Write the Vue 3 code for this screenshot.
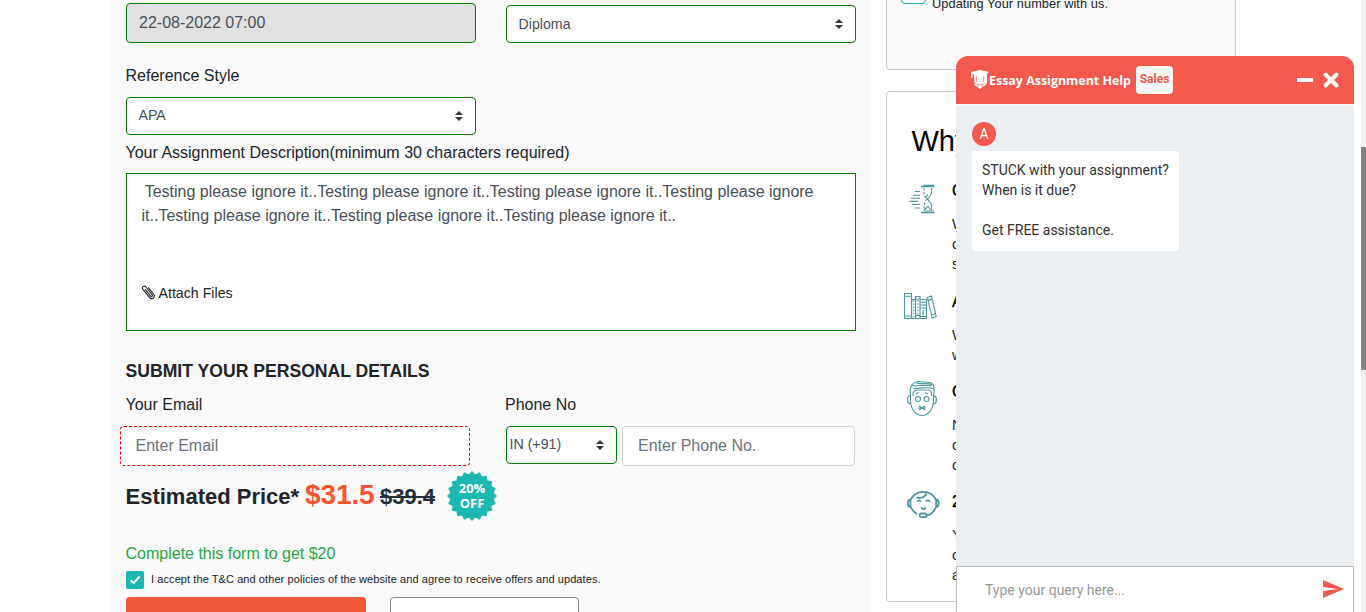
<script setup>
const features = [
  { icon: 'hourglass', title: 'C', lines: ['W', 'o', 's'] },
  { icon: 'books', title: 'A', lines: ['W', 'w'] },
  { icon: 'face', title: 'C', lines: ['N', 'o', 'o'] },
  { icon: 'support', title: '2', lines: ['Y', 'o', 'a'] }
]
const starPoints = Array.from({ length: 40 }, (_, i) => {
  const r = i % 2 ? 21.8 : 25
  const a = (i * Math.PI) / 20 - Math.PI / 2
  return `${(25 + r * Math.cos(a)).toFixed(2)},${(25 + r * Math.sin(a)).toFixed(2)}`
}).join(' ')
const testing = 'Testing please ignore it..'
</script>

<template>
  <div class="page">
    <main class="form">
      <div class="row top-row">
        <div class="field date">22-08-2022 07:00</div>
        <div class="field select">
          <span>Diploma</span>
          <svg class="caret" viewBox="0 0 8 10"><path d="M4 0L8 4H0zM0 6H8L4 10z" /></svg>
        </div>
      </div>
      <label class="label ref">Reference Style</label>
      <div class="field select apa">
        <span>APA</span>
        <svg class="caret" viewBox="0 0 8 10"><path d="M4 0L8 4H0zM0 6H8L4 10z" /></svg>
      </div>
      <label class="label desc">Your Assignment Description(minimum 30 characters required)</label>
      <div class="textarea">
        <p class="typed">&nbsp;{{ testing.repeat(7) }}</p>
        <div class="attach">
          <svg class="clip" viewBox="0 0 14 16">
            <path d="M4 5.2L9.6 12.2C10.5 13.3 12 12 11.2 10.9L4.9 3C3.2.9.2 3.2 1.9 5.4L8.4 13.4C10.9 16.4 15 13.1 12.5 10L7.2 3.4" />
          </svg>
          <span>Attach Files</span>
        </div>
      </div>
      <h2 class="heading">SUBMIT YOUR PERSONAL DETAILS</h2>
      <div class="row labels">
        <label class="label">Your Email</label>
        <label class="label">Phone No</label>
      </div>
      <div class="row inputs">
        <div class="field email">Enter Email</div>
        <div class="phone">
          <div class="field select code">
            <span>IN (+91)</span>
            <svg class="caret" viewBox="0 0 8 10"><path d="M4 0L8 4H0zM0 6H8L4 10z" /></svg>
          </div>
          <div class="field number">Enter Phone No.</div>
        </div>
      </div>
      <div class="price">
        <span class="est">Estimated Price*</span>
        <span class="now">$31.5</span>
        <s class="was">$39.4</s>
        <div class="badge">
          <svg viewBox="0 0 50 50"><polygon :points="starPoints" /></svg>
          <span>20%<br />OFF</span>
        </div>
      </div>
      <p class="bonus">Complete this form to get $20</p>
      <div class="terms">
        <span class="check"><svg viewBox="0 0 18 18"><path d="M4.6 9.2L7.6 12L13.6 5.6" /></svg></span>
        <span>I accept the T&amp;C and other policies of the website and agree to receive offers and updates.</span>
      </div>
      <div class="buttons">
        <div class="btn primary"></div>
        <div class="btn outline"></div>
      </div>
    </main>

    <aside class="side">
      <section class="card offer">
        <span class="box"></span>
        <span class="offer-text">Updating Your number with us.</span>
      </section>
      <section class="card why">
        <h3>Why</h3>
        <div v-for="f in features" :key="f.icon" class="feature" :class="f.icon">
          <svg v-if="f.icon === 'hourglass'" class="ico" width="34" height="34" viewBox="0 0 34 34">
            <path stroke-width="1.6" d="M15 4.5H28.5M15 30.5H28.5" />
            <path d="M17.5 3.4H28M17.5 29H28" />
            <path d="M25.5 6C26.5 12 24.5 14 21 17C24.5 20 26.5 22 25.5 28" />
            <path stroke-dasharray="2.5 1.5" d="M18 6V12C18 14 20.5 15 21 17C19.5 19 18 20 18 28" />
            <path d="M18 28L22 24.5L25 28M19 16L22 12.5" />
            <path d="M9 9.5H14M7 13.2H14M5 16.2H14M3.5 19.4H12M6 22.5H14M9 26H14" />
          </svg>
          <svg v-else-if="f.icon === 'books'" class="ico" width="34" height="34" viewBox="0 0 34 34">
            <path d="M1.5 3.5H8.5V28.5H1.5zM1.5 6.3H8.5M1.5 26H8.5M8.5 9.5H12.5V28.5H8.5zM12.5 6.5H17V28.5H12.5zM12.5 9H17M12.5 25.5H17M17 9.5H23.5V28.5H17zM17 12.2H23.5M17 15H23.5M17 18H23.5M17 26.5H23.5M24.5 7.5L28.5 6L33.2 26.3L29.2 28zM25.2 10.5L29 9M28.5 25.3L32.5 23.6" />
            <path stroke-width="2" stroke-dasharray="2 1.2" opacity=".55" d="M10.5 10V28M14.8 10V25" />
            <path d="M20 20V25" />
          </svg>
          <svg v-else-if="f.icon === 'face'" class="ico" width="34" height="40" viewBox="0 0 34 40">
            <path d="M5.5 18V23C6 32 11 37.5 17 37.5S28 32 28.5 23V18M5.5 18C4.5 12 5 4 14 3.5L25 4.5C29 5 30 11 28.5 18M8 18C7.5 13 10 12 13 12H22C26 12 27 14 26.5 18M7 7.5C12 9 20 5.5 27 8M8 10.5C14 11 21 8.5 28 10.5M11 5C16 6.5 22 4.5 27 6.5" />
            <path d="M5.5 18C1.5 17 1.5 26 6 26M28.5 18C32.5 17 32.5 26 28 26M11 16L14 14.5M20 14.5L23 16M14 28L20 32M20 28L14 32M13 30H21" />
            <circle cx="13" cy="21" r="2.5" /><circle cx="21.5" cy="21" r="2.5" />
          </svg>
          <svg v-else class="ico bold" width="36" height="34" viewBox="0 0 36 34">
            <path d="M5.5 17.5V11C8 5.5 12.5 2.8 18.5 2.8S28.5 5.5 31.2 11V17.5C29.5 22 26 25.5 21.5 27M5.5 10.5C2 10.5 2.2 18 5.5 18M31.2 10.5C34.5 10.5 34.5 18 31.2 18M5.5 17.5C7 21 9 23.2 12 25M11.5 8.5C17 9.5 20.5 7.5 21.5 4M12.2 12.6C13 11 15.2 11 16 12.6M21 12.6C21.8 11 24 11 24.8 12.6M16.3 18.4C17 20.5 20 20.5 20.8 18.4" />
            <rect x="14.7" y="24.5" width="7" height="3.6" rx="1.8" />
          </svg>
          <div class="copy">
            <strong>{{ f.title }}</strong>
            <p><span v-for="(l, i) in f.lines" :key="i">{{ l }}</span></p>
          </div>
        </div>
      </section>
    </aside>

    <div class="chat">
      <header>
        <svg class="logo" width="162" height="26" viewBox="0 0 162 26">
          <path class="cap" d="M0 4L9 2L18 4L16 6V15L14.5 17L9 21L3.5 17L3 6.5L1.5 6V10H.3z" />
          <path class="cap-lines" d="M5.5 8V14M12.6 8V14M4 15.5L9 17L14 15.5M7 16V19M11 16V19" />
          <text x="18" y="16.5" textLength="142" lengthAdjust="spacingAndGlyphs">Essay Assignment Help</text>
        </svg>
        <span class="sales">Sales</span>
        <svg class="controls" width="44" height="20" viewBox="0 0 44 20">
          <path class="min" d="M0 10H16" /><path class="close" d="M28.5 4.5L39.5 15.5M39.5 4.5L28.5 15.5" />
        </svg>
      </header>
      <div class="messages">
        <div class="avatar">A</div>
        <div class="bubble">STUCK with your assignment?<br />When is it due?<br /><br />Get FREE assistance.</div>
      </div>
      <div class="query">
        <span>Type your query here...</span>
        <svg width="21" height="18" viewBox="0 0 21 18"><path d="M0 0L21 9L0 18V11L15 9L0 7z" /></svg>
      </div>
    </div>
    <div class="scroll"><div class="thumb"></div></div>
  </div>
</template>

<style>
body { margin: 0; overflow: hidden; }
</style>

<style scoped>
* { box-sizing: border-box; }
.page { position: relative; width: 1366px; height: 612px; overflow: hidden; display: flex; background: #fff; padding-left: 111px; font-family: "Liberation Sans", Arial, sans-serif; font-size: 16px; line-height: 24px; color: #212529; }
h2, h3, p { margin: 0; }
.form { width: 760px; height: 612px; padding: 3px 15px 0; background: #f9f9f9; overflow: hidden; flex: none; }
.row { display: flex; gap: 30px; }
.row > * { width: 350px; }
.field { display: flex; align-items: center; height: 40px; border: 1px solid #ced4da; border-radius: 4px; background: #fff; color: #6c757d; }
.top-row { align-items: flex-end; }
.date { background: #e1e1e1; border-color: green; padding: 0 12px 1px; color: #495057; }
.select { height: 38px; border-color: green; color: #495057; font-size: 14.2px; padding: 0 12px 0 11.5px; justify-content: space-between; }
.apa span, .code span { margin-top: -2px; }
.caret { width: 8px; height: 10px; fill: #343a40; }
.label { display: block; margin-left: -0.5px; }
.ref { margin-top: 21px; }
.apa { margin-top: 9px; width: 350px; }
.desc { margin-top: 6px; }
.textarea { height: 158px; width: 730px; margin-top: 8px; border: 1px solid green; background: #fff; padding: 6px 15px 0 14.5px; color: #495057; }
.typed { height: 103px; text-indent: -1.3px; }
.attach { display: flex; align-items: center; gap: 3px; height: 20px; font-size: 14.2px; color: #212529; }
.clip { width: 14px; height: 16px; margin: -2px 1px 0 -1px; fill: none; stroke: #212529; stroke-width: 1.1; }
.heading { margin-top: 28px; margin-left: -0.5px; font-size: 17.6px; line-height: 24px; }
.labels { margin-top: 10px; }
.inputs { margin-top: 9px; }
.email { border: 1px dashed red; position: relative; left: -6px; padding: 0 14.5px 1px; }
.phone { display: flex; align-items: flex-start; gap: 5px; }
.code { width: 111px; padding-left: 2.5px; flex: none; }
.number { width: 233px; padding: 0 15px 1px; }
.price { display: flex; height: 50px; margin-top: 5px; align-items: flex-start; font-weight: 700; }
.est { font-size: 22px; width: 179.5px; margin: 14px 0 0 -0.5px; }
.now { font-size: 28px; width: 75px; margin-top: 12px; color: #fa5430; letter-spacing: -0.1px; }
.was { font-size: 22px; margin-top: 14px; width: 67px; color: #212f3c; }
.badge { position: relative; width: 50px; height: 50px; font-family: "Open Sans", sans-serif; font-size: 13px; line-height: 15px; text-align: center; color: #fff; }
.badge svg { display: block; width: 50px; height: 50px; fill: #1db7b3; }
.badge span { position: absolute; left: 0; top: 10px; width: 50px; }
.bonus { margin-top: 21px; margin-left: -0.5px; color: #28a745; }
.terms { display: flex; margin-top: 5px; gap: 7px; font-size: 11px; line-height: 17px; color: #212529; white-space: nowrap; letter-spacing: .08px; }
.check { width: 18px; height: 18px; border-radius: 2px; background: #1db7b3; }
.check svg { display: block; fill: none; stroke: #fff; stroke-width: 2.2; }
.buttons { display: flex; gap: 24px; margin-top: 8px; }
.btn { height: 44px; border-radius: 4px; }
.primary { width: 240px; background: #f2583a; }
.outline { width: 189px; border: 1px solid #888; background: #fff; }
.side { margin-left: 15px; width: 350px; flex: none; }
.card { border: 1px solid #c8c8c8; border-radius: 4px; overflow: hidden; }
.offer { display: flex; height: 90px; margin-top: -20px; background: #f9f9f9; padding: 0 14px; gap: 6px; }
.box { width: 25px; height: 24px; margin-top: -1px; border: 1px solid #1db7b3; border-radius: 4px; background: #fff; }
.offer-text { font-size: 12.8px; margin-top: 11px; letter-spacing: .06px; }
.why { margin-top: 21px; height: 511px; background: #fff; position: relative; }
.why h3 { margin: 30px 0 0 24.5px; height: 36px; font-size: 29px; font-weight: 400; line-height: 38px; color: #000; }
.feature { display: flex; padding-left: 16px; gap: 14px; color: #212529; }
.hourglass { margin-top: 21px; height: 111px; }
.books { height: 90px; }
.face { height: 110px; }
.ico { flex: none; fill: none; stroke: #4e999d; stroke-width: 1.1; }
.hourglass .ico { margin: 3px -2px 0 3px; }
.books .ico { margin: 0 1px 0 0; }
.face .ico { margin: -2px -1px 0 2px; }
.support .ico { margin: -1px -3px 0 2px; }
.ico.bold { stroke-width: 1.8; }
.copy { width: 270px; padding-top: 2px; }
.copy strong { display: block; font-weight: 400; -webkit-text-stroke: .35px #000; color: #000; font-size: 16px; line-height: 20px; margin-bottom: 13px; }
.copy p span { display: block; font-size: 14.4px; line-height: 20px; }
.chat { position: absolute; left: 956px; top: 56px; width: 398px; height: 556px; display: flex; flex-direction: column; font-family: Roboto, sans-serif; font-size: 14px; line-height: 20px; }
header { height: 48px; background: #f4594d; border-radius: 12px 12px 0 0; display: flex; padding-left: 15px; }
.logo { margin-top: 12px; flex: none; }
.logo text { font-family: "Open Sans", "Noto Sans", sans-serif; font-weight: 700; font-size: 13px; fill: #fff; }
.cap { fill: #fff; }
.cap-lines { fill: none; stroke: #f4594d; stroke-width: .6; }
.sales { width: 37px; height: 28px; margin: 10px 0 0 3px; border-radius: 4px; background: #f5f5f5; color: #f4594d; font-size: 12px; font-weight: 700; line-height: 26px; text-align: center; }
.controls { margin: 14px 0 0 124px; fill: none; stroke: #fff; }
.min { stroke-width: 4; }
.close { stroke-width: 4; stroke-linecap: round; }
.messages { flex: 1; border-top: 2px solid #f7f8f9; background: #ebeff2; padding: 16px; }
.avatar { width: 24px; height: 24px; border-radius: 50%; background: #f4594d; color: #fff; line-height: 24px; text-align: center; }
.bubble { width: 207px; height: 100px; margin-top: 5px; padding: 9px 10px; border-radius: 0 4px 4px 4px; background: #fff; color: #333; white-space: nowrap; }
.query { height: 46px; background: #fff; border: 1px solid #bbb; border-bottom: 0; display: flex; justify-content: space-between; padding: 13px 9px 0 28px; color: #999; }
.query svg { fill: #f4594d; }
.scroll { position: absolute; left: 1361px; top: 0; width: 5px; height: 612px; padding-top: 147px; background: #f1f1f1; }
.thumb { height: 223px; background: #818181; }
</style>
